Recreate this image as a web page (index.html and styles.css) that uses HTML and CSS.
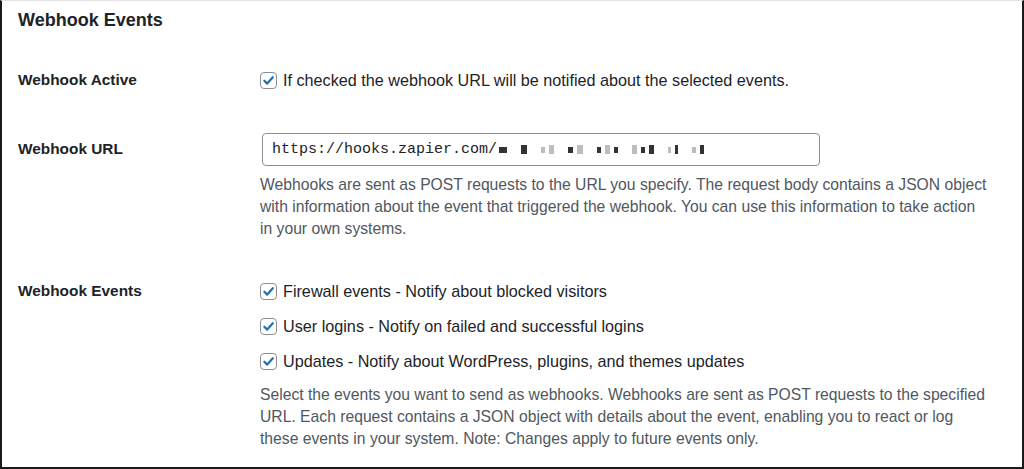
FILE: index.html
```html
<!DOCTYPE html>
<html>
<head>
<meta charset="utf-8">
<link rel="stylesheet" href="styles.css">
</head>
<body>
<div class="panel">
  <h2 class="title">Webhook Events</h2>
  <div class="row row-active">
    <div class="label">Webhook Active</div>
    <div class="field">
      <label class="check"><span class="box"><svg viewBox="0 0 16 16"><path d="M3.6 8.3 L6.6 11.3 L12.6 4.6" /></svg></span>If checked the webhook URL will be notified about the selected events.</label>
    </div>
  </div>
  <div class="row row-url">
    <div class="label">Webhook URL</div>
    <div class="field">
      <div class="input"><span class="url">https://hooks.zapier.com/</span><span class="redact">
        <i class="px d w8"></i><i class="px d w6 t g1"></i><i class="px l w4 g1"></i><i class="px l w5 t"></i><i class="px d w5 g1"></i><i class="px l w6 t"></i><i class="px d w4 g1"></i><i class="px l w5 t"></i><i class="px d w4"></i><i class="px l w5 t g1"></i><i class="px d w4"></i><i class="px d w5 t"></i><i class="px l w3 g1"></i><i class="px d w3 t"></i><i class="px l w4 g1"></i><i class="px d w4 t"></i>
      </span></div>
      <p class="desc">Webhooks are sent as POST requests to the URL you specify. The request body contains a JSON object with information about the event that triggered the webhook. You can use this information to take action in your own systems.</p>
    </div>
  </div>
  <div class="row row-events">
    <div class="label">Webhook Events</div>
    <div class="field">
      <label class="check"><span class="box"><svg viewBox="0 0 16 16"><path d="M3.6 8.3 L6.6 11.3 L12.6 4.6" /></svg></span>Firewall events - Notify about blocked visitors</label>
      <label class="check"><span class="box"><svg viewBox="0 0 16 16"><path d="M3.6 8.3 L6.6 11.3 L12.6 4.6" /></svg></span>User logins - Notify on failed and successful logins</label>
      <label class="check"><span class="box"><svg viewBox="0 0 16 16"><path d="M3.6 8.3 L6.6 11.3 L12.6 4.6" /></svg></span>Updates - Notify about WordPress, plugins, and themes updates</label>
      <p class="desc desc-events">Select the events you want to send as webhooks. Webhooks are sent as POST requests to the specified URL. Each request contains a JSON object with details about the event, enabling you to react or log these events in your system. Note: Changes apply to future events only.</p>
    </div>
  </div>
</div>
</body>
</html>
```
FILE: styles.css
```css
html, body {
  margin: 0;
  padding: 0;
  background: #fff;
}
body {
  font-family: "Liberation Sans", Arial, sans-serif;
  color: #1d2327;
  width: 1024px;
  height: 469px;
  overflow: hidden;
}
.panel {
  box-sizing: border-box;
  width: 1024px;
  height: 469px;
  border: 2px solid #1a1a1a;
  border-top: 1px solid #e5e5e5;
  padding: 0 16px 0 16px;
}
.title {
  margin: 0;
  padding-top: 8px;
  font-size: 18px;
  font-weight: 700;
  line-height: 22px;
  color: #1d2327;
}
.row {
  display: flex;
}
.label {
  width: 242px;
  flex: none;
  font-weight: 700;
  font-size: 15.4px;
  line-height: 20px;
}
.field {
  flex: 1;
  font-size: 16.2px;
  line-height: 22px;
}
.row-active {
  margin-top: 38px;
}
.row-active .label {
  padding-top: 1px;
}
.check {
  display: flex;
  align-items: center;
  height: 22px;
  margin-bottom: 13px;
}
.box {
  box-sizing: border-box;
  width: 17px;
  height: 17px;
  border: 1px solid #8c8f94;
  border-radius: 4px;
  margin-right: 6px;
  display: flex;
  align-items: center;
  justify-content: center;
  background: #fff;
}
.box svg {
  width: 15px;
  height: 15px;
  fill: none;
  stroke: #2271b1;
  stroke-width: 2.4;
  stroke-linecap: round;
  stroke-linejoin: round;
}
.row-url {
  margin-top: 29px;
}
.row-url .label {
  padding-top: 6px;
}
.input {
  box-sizing: border-box;
  width: 558px;
  height: 33px;
  margin-left: 2px;
  border: 1px solid #8c8f94;
  border-radius: 4px;
  display: flex;
  align-items: center;
  padding-left: 9px;
}
.url {
  font-family: "Liberation Mono", "DejaVu Sans Mono", monospace;
  font-size: 15px;
  color: #1d2327;
}
.redact {
  display: inline-flex;
  align-items: center;
  gap: 4px;
  margin-left: 2px;
}
.px {
  display: inline-block;
  height: 6px;
}
.px.t { height: 9px; }
.px.g1 { margin-left: 10px; }
.px.d { background: #333; }
.px.l { background: #bdbdbd; }
.w3 { width: 3px; }
.w4 { width: 4px; }
.w5 { width: 5px; }
.w6 { width: 6px; }
.w8 { width: 8px; }
.desc {
  margin: 8px 0 0 0;
  color: #50575e;
  font-size: 15.7px;
  line-height: 22px;
  width: 730px;
}
.row-events {
  margin-top: 40px;
}
.row-events .label {
  padding-top: 1px;
}
.desc-events {
  margin-top: -1px;
}
```
